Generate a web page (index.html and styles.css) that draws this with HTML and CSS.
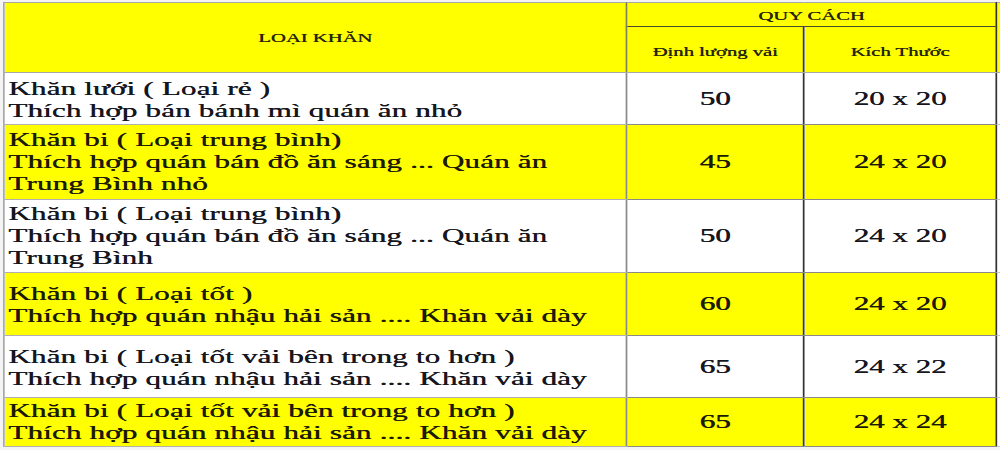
FILE: index.html
```html
<!DOCTYPE html>
<html lang="vi">
<head>
<meta charset="utf-8">
<title>Bảng khăn</title>
<link rel="stylesheet" href="styles.css">
</head>
<body>
<table class="sheet">
  <colgroup>
    <col class="c-name">
    <col class="c-weight">
    <col class="c-size">
    <col class="c-extra">
  </colgroup>
  <thead>
    <tr class="h-top">
      <th rowspan="2" class="name-h">LOẠI KHĂN</th>
      <th colspan="2" class="group-h">QUY CÁCH</th>
      <th rowspan="2" class="extra-h"></th>
    </tr>
    <tr class="h-sub">
      <th class="sub-h weight-h">Định lượng vải</th>
      <th class="sub-h size-h">Kích Thước</th>
    </tr>
  </thead>
  <tbody>
    <tr class="row r1 white">
      <td class="name">Khăn lưới ( Loại rẻ )<br>Thích hợp bán bánh mì quán ăn nhỏ</td>
      <td class="num weight">50</td>
      <td class="num size">20 x 20</td>
      <td class="extra"></td>
    </tr>
    <tr class="row r2 yellow">
      <td class="name">Khăn bi ( Loại trung bình)<br>Thích hợp quán bán đồ ăn sáng ... Quán ăn<br>Trung Bình nhỏ</td>
      <td class="num weight">45</td>
      <td class="num size">24 x 20</td>
      <td class="extra"></td>
    </tr>
    <tr class="row r3 white">
      <td class="name">Khăn bi ( Loại trung bình)<br>Thích hợp quán bán đồ ăn sáng ... Quán ăn<br>Trung Bình</td>
      <td class="num weight">50</td>
      <td class="num size">24 x 20</td>
      <td class="extra"></td>
    </tr>
    <tr class="row r4 yellow">
      <td class="name">Khăn bi ( Loại tốt )<br>Thích hợp quán nhậu hải sản .... Khăn vải dày</td>
      <td class="num weight">60</td>
      <td class="num size">24 x 20</td>
      <td class="extra"></td>
    </tr>
    <tr class="row r5 white">
      <td class="name">Khăn bi ( Loại tốt vải bên trong to hơn )<br>Thích hợp quán nhậu hải sản .... Khăn vải dày</td>
      <td class="num weight">65</td>
      <td class="num size">24 x 22</td>
      <td class="extra"></td>
    </tr>
    <tr class="row r6 yellow">
      <td class="name">Khăn bi ( Loại tốt vải bên trong to hơn )<br>Thích hợp quán nhậu hải sản .... Khăn vải dày</td>
      <td class="num weight">65</td>
      <td class="num size">24 x 24</td>
      <td class="extra"></td>
    </tr>
  </tbody>
</table>
</body>
</html>
```

FILE: styles.css
```css
html, body {
  margin: 0;
  padding: 0;
  background: #f4f4f4;
  overflow: hidden;
}

body {
  font-family: "Liberation Serif", "Times New Roman", serif;
  color: #151515;
}

.sheet {
  border-collapse: collapse;
  table-layout: fixed;
  width: 580px;
  margin: 2px 0 0 3px;
  transform: scaleX(1.72);
  transform-origin: 0 0;
  background: #ffffff;
  border-top: 1px solid #a8a8a8;
  border-left: 1px solid #a8a8a8;
}

.c-name { width: 362px; }
.c-weight { width: 103px; }
.c-size { width: 112px; }
.c-extra { width: 3px; }

th, td {
  padding: 0;
  overflow: hidden;
  white-space: nowrap;
}

th {
  font-weight: normal;
  font-size: 12px;
  line-height: 14px;
  color: #25250a;
  background: #ffff00;
  text-align: center;
  vertical-align: middle;
  text-shadow: 0.3px 0 0 currentColor;
}

.h-top { height: 24px; }
.h-sub { height: 46px; }

.name-h {
  border-right: 1px solid #808060;
  border-bottom: 1px solid #a8a8a8;
}

.group-h {
  border-bottom: 1px solid #4a4a30;
  border-right: 1px solid #333333;
  padding-top: 2px;
}

.sub-h {
  border-bottom: 1px solid #a8a8a8;
  padding-top: 4px;
}

.weight-h { border-right: 1px solid #333333; }
.size-h { border-right: 1px solid #333333; }

.extra-h { border-bottom: 1px solid #a8a8a8; }

td {
  font-size: 18px;
  line-height: 22px;
  vertical-align: middle;
  text-shadow: 0.35px 0 0 currentColor;
}

.yellow td { background: #ffff00; color: #1b1b05; }
.white td { background: #ffffff; color: #161620; }
.yellow td.extra, .white td.extra { background: #ffffff; }

td.name {
  text-align: left;
  padding-left: 2px;
  letter-spacing: 0.12px;
  border-right: 1px solid #8a8a8a;
  border-bottom: 1px solid #b0b0b0;
}

td.num {
  text-align: center;
  border-bottom: 1px solid #8a8a8a;
  border-right: 1px solid #333333;
}

td.extra {
  border-bottom: 1px solid #c8c8c8;
}

.r1 { height: 52px; }
.r2 { height: 75px; }
.r3 { height: 73px; }
.r4 { height: 63px; }
.r5 { height: 62px; }
.r6 { height: 49px; }

.r1 td.name { padding-top: 3px; }
.r4 td.name, .r5 td.name { padding-top: 2px; }
```
